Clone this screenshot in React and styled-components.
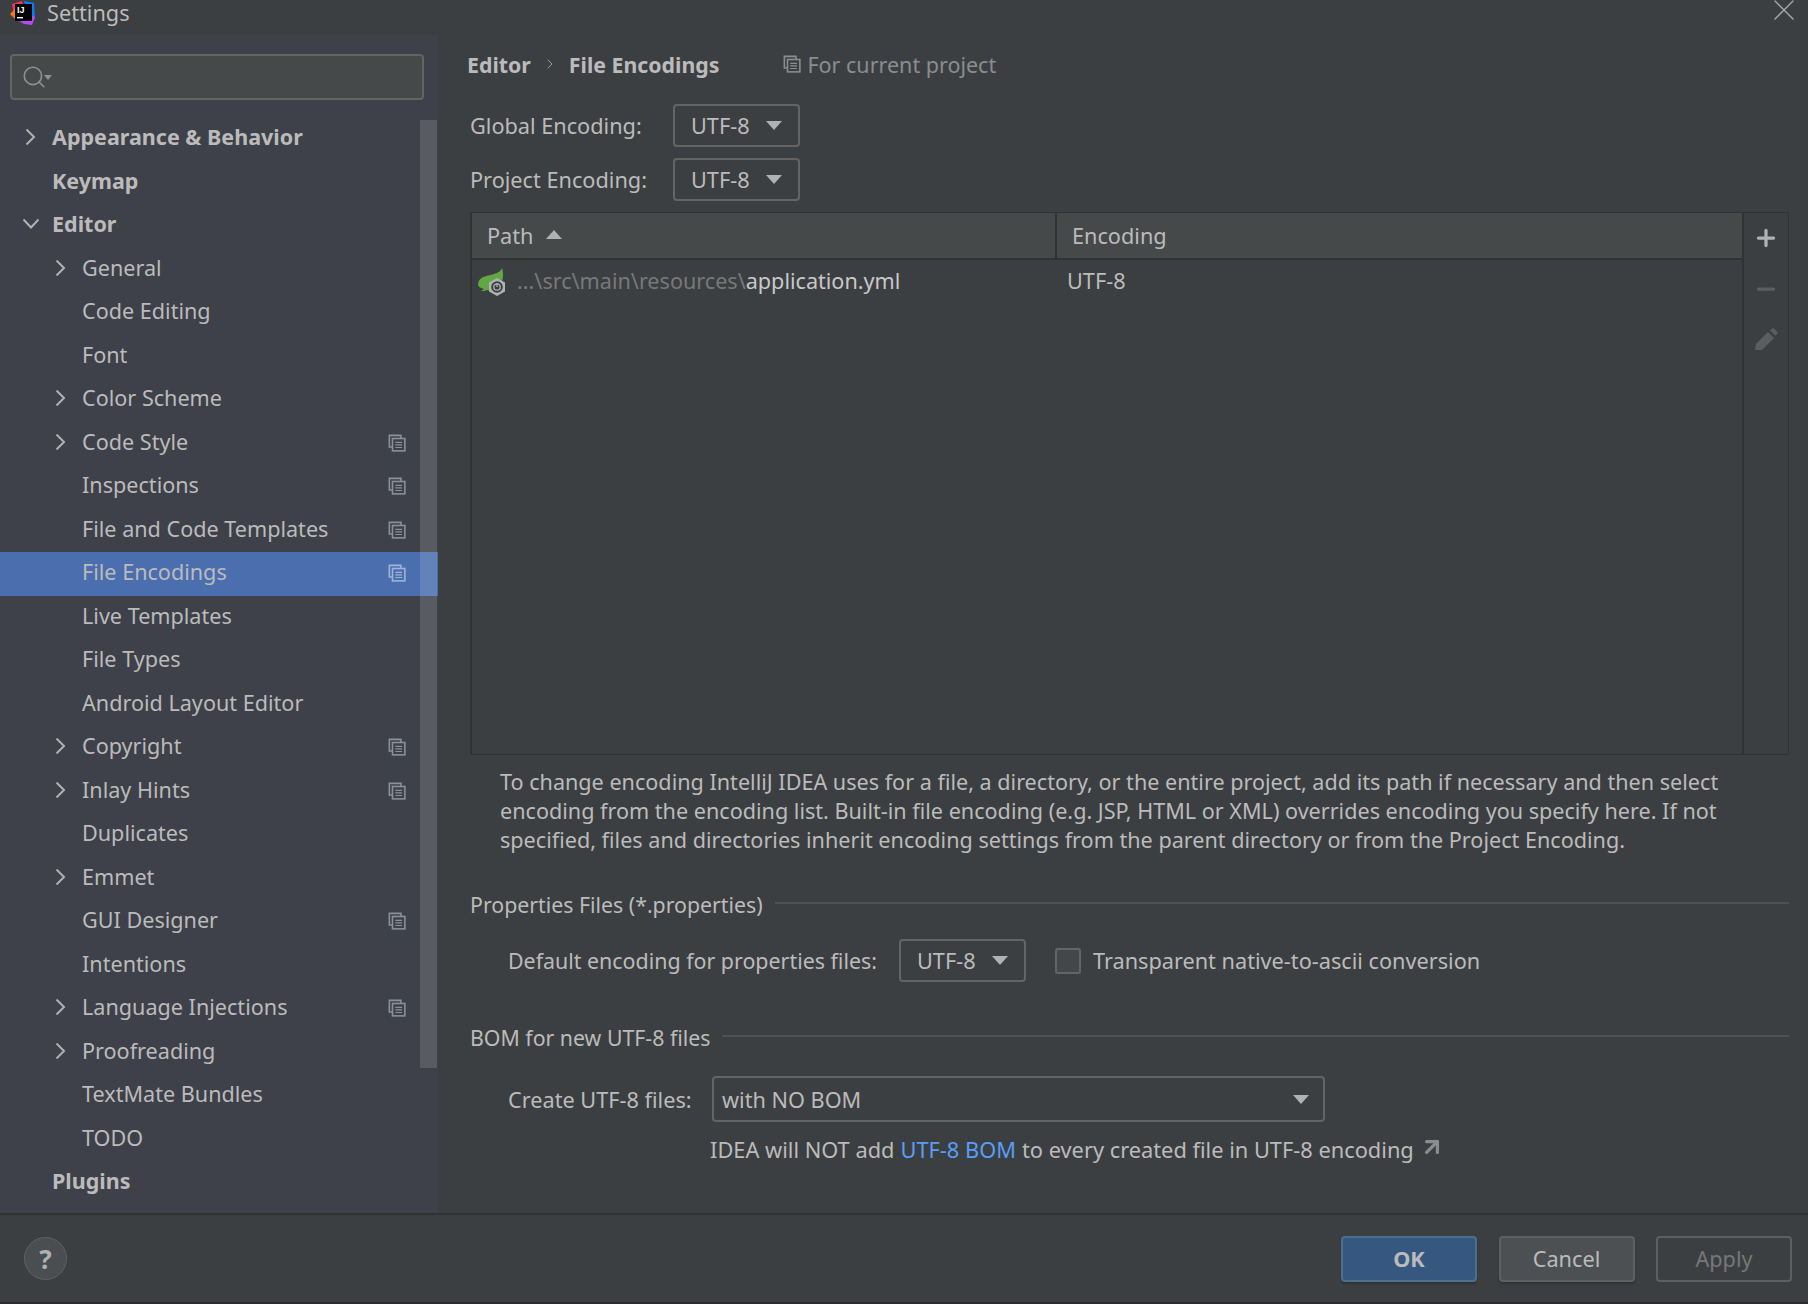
import React from 'react'
import styled, { createGlobalStyle } from 'styled-components'
import { Plus, Minus, ChevronRight, X, Search, ArrowUpRight } from 'lucide-react'

const GlobalStyle = createGlobalStyle`
  html, body { margin: 0; padding: 0; background: #3c3f41; }
  * { box-sizing: border-box; }
`

const Page = styled.div`
  width: 1808px;
  height: 1304px;
  display: flex;
  flex-direction: column;
  overflow: hidden;
  background: #3c3f41;
  color: #bbbbbb;
  font-family: "Noto Sans", "Open Sans", sans-serif;
  font-size: 21.7px;
`
const TitleBar = styled.div`
  height: 35px;
  flex: none;
  display: flex;
  align-items: center;
  padding-left: 10px;
  gap: 11px;
  padding-bottom: 10px;
`
const TitleText = styled.span`
  line-height: 25px;
`
const CloseBtn = styled.div`
  margin-left: auto;
  margin-right: 6px;
  margin-bottom: 6px;
  height: 36px;
  color: #a8a8a8;
`
const Body = styled.div`
  flex: 1;
  display: flex;
  min-height: 0;
`
const Sidebar = styled.div`
  position: relative;
  width: 438px;
  flex: none;
  background: #3e4149;
  padding-top: 19px;
`
const SearchBox = styled.div`
  height: 46px;
  width: 414px;
  margin-left: 10px;
  display: flex;
  align-items: center;
  padding-left: 9px;
  background: #45494a;
  border: 2px solid #646464;
  border-radius: 4px;
  color: #8f9294;
`
const Caret = styled.span`
  width: 0;
  height: 0;
  border-left: ${p => p.$size || 4}px solid transparent;
  border-right: ${p => p.$size || 4}px solid transparent;
  border-top: ${p => (p.$size || 4) + 1}px solid ${p => p.$color || '#8f9294'};
  margin-left: ${p => p.$gap ?? 0}px;
`
const Tree = styled.div`
  margin-top: 17px;
`
const Row = styled.div`
  position: relative;
  height: 43.5px;
  display: flex;
  align-items: center;
  padding-left: ${p => (p.$level ? 82 : 52)}px;
  padding-bottom: 4px;
  font-weight: ${p => (p.$level ? 400 : 700)};
  font-size: ${p => (p.$level ? 21.6 : 21.5)}px;
  background: ${p => (p.$active ? '#4b6eaf' : 'transparent')};
`
const Arrow = styled.span`
  position: absolute;
  left: ${p => (p.$level ? 53 : 23)}px;
  top: 12px;
  height: 16px;
  color: #afb1b3;
`
const ProjectMark = styled.span`
  position: absolute;
  left: 388px;
  top: 12px;
  height: 18px;
  color: ${p => (p.$active ? '#9fb4d6' : '#8a9199')};
`
const ScrollThumb = styled.div`
  position: absolute;
  left: 420px;
  top: 85px;
  width: 17px;
  height: 948px;
  background: rgba(255, 255, 255, 0.14);
`
const Main = styled.div`
  flex: 1;
  min-width: 0;
  padding: 0 19px 0 32px;
`
const Crumbs = styled.div`
  height: 58px;
  margin: 0 0 11px -3px;
  display: flex;
  align-items: center;
  font-size: 21.3px;
  font-weight: 700;
`
const CrumbSep = styled.span`
  display: flex;
  margin: 0 11px;
  color: #9a9c9e;
`
const ProjectNote = styled.span`
  display: flex;
  align-items: center;
  gap: 6px;
  margin-left: 64px;
  font-size: 21.5px;
  font-weight: 400;
  color: #8a8d90;
`
const FormRow = styled.div`
  display: flex;
  align-items: center;
  height: 43px;
  margin-bottom: 11px;
`
const Label = styled.span`
  width: ${p => p.$width}px;
  flex: none;
  white-space: nowrap;
  font-size: ${p => p.$size || 21.7}px;
`
const Combo = styled.div`
  display: flex;
  align-items: center;
  justify-content: space-between;
  width: ${p => p.$width}px;
  height: ${p => p.$height || 43}px;
  padding: 0 ${p => p.$right || 16}px 0 ${p => p.$left || 16}px;
  border: 2px solid #646464;
  border-radius: 4px;
  flex: none;
`
const TablePanel = styled.div`
  display: flex;
  height: 543px;
  border: 1px solid #323232;
  border-left-width: 2px;
  margin-bottom: 13px;
`
const TableBody = styled.div`
  flex: 1;
  min-width: 0;
`
const TableHead = styled.div`
  height: 47px;
  display: flex;
  align-items: center;
  background: #45494a;
  border-bottom: 2px solid #323232;
`
const HeadCell = styled.div`
  width: ${p => p.$width};
  height: 100%;
  display: flex;
  align-items: center;
  gap: 12px;
  padding-left: 15px;
  border-left: ${p => (p.$sep ? '2px solid #323232' : 'none')};
  flex: ${p => (p.$sep ? 1 : 'none')};
`
const SortCaret = styled.span`
  width: 0;
  height: 0;
  border-left: 8px solid transparent;
  border-right: 8px solid transparent;
  border-bottom: 9px solid #afb1b3;
  margin-top: -3px;
`
const TableRow = styled.div`
  height: 40px;
  display: flex;
  align-items: center;
`
const PathCell = styled.div`
  width: 595px;
  display: flex;
  align-items: center;
  padding-left: 6px;
  gap: 11px;
  font-size: 21.6px;
`
const DimPath = styled.span`
  color: #787878;
`
const Strong = styled.span`
  color: #c8c8c8;
`
const Actions = styled.div`
  width: 46px;
  flex: none;
  border-left: 2px solid #323232;
  display: flex;
  flex-direction: column;
  align-items: center;
  padding-top: 12px;
  gap: 25px;
`
const ActionIcon = styled.span`
  display: flex;
  height: 26px;
  align-items: center;
  color: ${p => (p.$dim ? '#5b5d5f' : '#afb1b3')};
`
const Description = styled.p`
  margin: 0 0 0 30px;
  font-size: 21.6px;
  line-height: 28.8px;
  height: 121px;
`
const GroupTitle = styled.div`
  display: flex;
  align-items: center;
  gap: 12px;
  height: 30px;
  font-size: 21.3px;
  &::after {
    content: '';
    flex: 1;
    height: 2px;
    background: #4e5052;
    margin-top: -2px;
  }
`
const GroupRow = styled.div`
  display: flex;
  align-items: center;
  padding-left: 38px;
  margin-top: ${p => p.$top}px;
`
const GroupGap = styled.div`
  height: 40px;
`
const CheckBox = styled.span`
  width: 26px;
  height: 26px;
  margin: 0 12px 0 29px;
  background: #43474a;
  border: 2px solid #646464;
  border-radius: 3px;
  flex: none;
`
const Hint = styled.div`
  display: flex;
  align-items: center;
  height: 30px;
  margin: 12px 0 0 240px;
  font-size: 21.8px;
`
const LinkText = styled.span`
  color: #589df6;
  margin: 0 6px;
`
const ExternalMark = styled.span`
  display: flex;
  height: 26px;
  margin: -5px 0 0 5px;
  color: #8a8d90;
`
const Footer = styled.div`
  height: 89px;
  flex: none;
  display: flex;
  align-items: center;
  padding: 0 16px 0 24px;
  border-top: 2px solid #323232;
`
const HelpBtn = styled.div`
  width: 43px;
  height: 43px;
  border-radius: 50%;
  display: flex;
  align-items: center;
  justify-content: center;
  background: #4b4e50;
  border: 1px solid #5e6163;
  font-weight: 700;
  font-size: 26px;
  color: #afb1b3;
`
const Buttons = styled.div`
  display: flex;
  gap: 21.5px;
  margin-left: auto;
`
const Button = styled.div`
  width: 136px;
  height: 46px;
  display: flex;
  align-items: center;
  justify-content: center;
  border-radius: 4px;
  border: 2px solid ${p => (p.$primary ? '#4c708c' : '#5e6060')};
  background: ${p => (p.$primary ? '#365880' : p.$off ? 'transparent' : '#4c5052')};
  font-weight: ${p => (p.$primary ? 700 : 400)};
  color: ${p => (p.$off ? '#777777' : '#bbbbbb')};
  box-shadow: ${p => (p.$off ? 'none' : '0 2px 2px rgba(0,0,0,.2)')};
`
const BottomEdge = styled.div`
  height: 2px;
  flex: none;
  background: #2b2b2b;
`
const SpringSvg = styled.svg`
  flex: none;
  margin-top: 3px;
`

const Logo = () => (
  <svg width="26" height="26" viewBox="0 0 26 26">
    <polygon points="2,4 12,1 14,8 4,14" fill="#fe315d" />
    <polygon points="0,14 5,9 9,20 4,18" fill="#f97a12" />
    <polygon points="14,1 24,3 25,19 17,14" fill="#087cfa" />
    <polygon points="4,18 14,24 22,25 25,17 10,10" fill="#b74af7" />
    <rect x="5" y="4" width="17" height="17" fill="#000" />
    <text x="7" y="13" fontSize="9" fontWeight="700" fill="#fff" fontFamily="Liberation Sans, sans-serif">IJ</text>
    <rect x="7" y="17" width="6" height="1.4" fill="#fff" />
  </svg>
)

const ProjectIcon = ({ size = 18 }) => (
  <svg width={size} height={size} viewBox="0 0 16 16" fill="none" stroke="currentColor" strokeWidth="1.4" style={{ display: 'block' }}>
    <path d="M3.5 11.5H1.2V1.2H11.5V3.5" />
    <rect x="4" y="4" width="11" height="11" />
    <path d="M6.5 7.5h6M6.5 9.7h6M6.5 12h6" strokeWidth="1.1" />
  </svg>
)

const SpringIcon = () => (
  <SpringSvg width="28" height="28" viewBox="0 0 28 28">
    <path d="M0 16C1 8 10 8 16 6c4-1 7-3 8-6 2 7 1 12-1 15-4 6-9 8-14 7-2 1-4 1-6 1l3-2c-3-1-6-2-6-5z" fill="#62a744" />
    <polygon points="19,10 27,14.5 27,23.5 19,28 11,23.5 11,14.5" fill="#afb1b3" />
    <circle cx="19" cy="19" r="5.8" fill="#3c3f41" />
    <circle cx="19" cy="19" r="3.2" fill="none" stroke="#afb1b3" strokeWidth="1.3" />
    <path d="M19 15v4" stroke="#afb1b3" strokeWidth="1.3" />
  </SpringSvg>
)

const Pencil = () => (
  <svg width="26" height="26" viewBox="0 0 26 26" fill="currentColor">
    <path d="M2 23l1-6L15 5l6 6L9 23z" />
    <path d="M17 3.5l2-2c.6-.5 1.3-.5 1.8 0l3.5 3.3c.5.6.5 1.3 0 1.8l-2 2z" />
  </svg>
)

// tree chevrons are wider than the lucide ones
const TreeChevron = ({ open }) => (
  <svg width="16" height="16" viewBox="0 0 16 16" fill="none" stroke="currentColor" strokeWidth="2" style={{ display: 'block' }}>
    <path d={open ? 'M0.5 3.5L8 11.5L15.5 3.5' : 'M3.5 0.5L11 8L3.5 15.5'} />
  </svg>
)

const treeItems = [
  { text: 'Appearance & Behavior', open: 'right' },
  { text: 'Keymap' },
  { text: 'Editor', open: 'down' },
  { text: 'General', level: 1, open: 'right' },
  { text: 'Code Editing', level: 1 },
  { text: 'Font', level: 1 },
  { text: 'Color Scheme', level: 1, open: 'right' },
  { text: 'Code Style', level: 1, open: 'right', mark: true },
  { text: 'Inspections', level: 1, mark: true },
  { text: 'File and Code Templates', level: 1, mark: true },
  { text: 'File Encodings', level: 1, mark: true, active: true },
  { text: 'Live Templates', level: 1 },
  { text: 'File Types', level: 1 },
  { text: 'Android Layout Editor', level: 1 },
  { text: 'Copyright', level: 1, open: 'right', mark: true },
  { text: 'Inlay Hints', level: 1, open: 'right', mark: true },
  { text: 'Duplicates', level: 1 },
  { text: 'Emmet', level: 1, open: 'right' },
  { text: 'GUI Designer', level: 1, mark: true },
  { text: 'Intentions', level: 1 },
  { text: 'Language Injections', level: 1, open: 'right', mark: true },
  { text: 'Proofreading', level: 1, open: 'right' },
  { text: 'TextMate Bundles', level: 1 },
  { text: 'TODO', level: 1 },
  { text: 'Plugins' },
]

const App = () => (
  <Page>
    <GlobalStyle />
    <TitleBar>
      <Logo />
      <TitleText>Settings</TitleText>
      <CloseBtn><X size={36} strokeWidth={0.9} /></CloseBtn>
    </TitleBar>
    <Body>
      <Sidebar>
        <SearchBox>
          <Search size={26} strokeWidth={1.5} />
          <Caret $gap={-3} />
        </SearchBox>
        <Tree>
          {treeItems.map(item => (
            <Row key={item.text} $level={item.level} $active={item.active}>
              {item.open && (
                <Arrow $level={item.level}>
                  <TreeChevron open={item.open === 'down'} />
                </Arrow>
              )}
              {item.text}
              {item.mark && <ProjectMark $active={item.active}><ProjectIcon /></ProjectMark>}
            </Row>
          ))}
        </Tree>
        <ScrollThumb />
      </Sidebar>
      <Main>
        <Crumbs>
          Editor
          <CrumbSep><ChevronRight size={16} strokeWidth={1.5} /></CrumbSep>
          File Encodings
          <ProjectNote><ProjectIcon />For current project</ProjectNote>
        </Crumbs>
        <FormRow>
          <Label $width={203}>Global Encoding:</Label>
          <Combo $width={127}>UTF-8<Caret $size={8} $color="#afb1b3" /></Combo>
        </FormRow>
        <FormRow>
          <Label $width={203}>Project Encoding:</Label>
          <Combo $width={127}>UTF-8<Caret $size={8} $color="#afb1b3" /></Combo>
        </FormRow>
        <TablePanel>
          <TableBody>
            <TableHead>
              <HeadCell $width="583px">Path<SortCaret /></HeadCell>
              <HeadCell $sep>Encoding</HeadCell>
            </TableHead>
            <TableRow>
              <PathCell>
                <SpringIcon />
                <span><DimPath>...\src\main\resources\</DimPath><Strong>application.yml</Strong></span>
              </PathCell>
              <span>UTF-8</span>
            </TableRow>
          </TableBody>
          <Actions>
            <ActionIcon><Plus size={26} strokeWidth={3} /></ActionIcon>
            <ActionIcon $dim><Minus size={26} strokeWidth={3} /></ActionIcon>
            <ActionIcon $dim><Pencil /></ActionIcon>
          </Actions>
        </TablePanel>
        <Description>
          To change encoding IntelliJ IDEA uses for a file, a directory, or the entire project, add its path if necessary and then select<br />
          encoding from the encoding list. Built-in file encoding (e.g. JSP, HTML or XML) overrides encoding you specify here. If not<br />
          specified, files and directories inherit encoding settings from the parent directory or from the Project Encoding.
        </Description>
        <GroupTitle>Properties Files (*.properties)</GroupTitle>
        <GroupRow $top={20}>
          <Label $width={391} $size={21.4}>Default encoding for properties files:</Label>
          <Combo $width={127}>UTF-8<Caret $size={8} $color="#afb1b3" /></Combo>
          <CheckBox />
          <span>Transparent native-to-ascii conversion</span>
        </GroupRow>
        <GroupGap />
        <GroupTitle>BOM for new UTF-8 files</GroupTitle>
        <GroupRow $top={24}>
          <Label $width={204}>Create UTF-8 files:</Label>
          <Combo $width={613} $height={46} $left={8} $right={14}>with NO BOM<Caret $size={8} $color="#afb1b3" /></Combo>
        </GroupRow>
        <Hint>
          IDEA will NOT add<LinkText>UTF-8 BOM</LinkText>to every created file in UTF-8 encoding
          <ExternalMark><ArrowUpRight size={26} strokeWidth={3} /></ExternalMark>
        </Hint>
      </Main>
    </Body>
    <Footer>
      <HelpBtn>?</HelpBtn>
      <Buttons>
        <Button $primary>OK</Button>
        <Button>Cancel</Button>
        <Button $off>Apply</Button>
      </Buttons>
    </Footer>
    <BottomEdge />
  </Page>
)

export default App
